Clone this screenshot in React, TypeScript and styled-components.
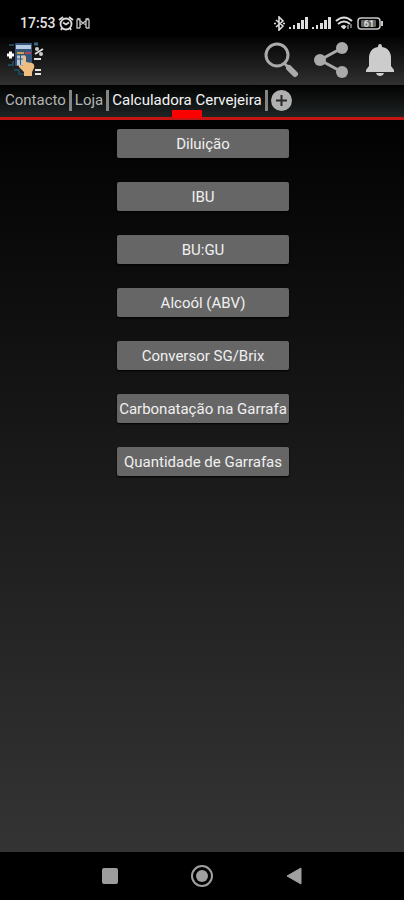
import React from "react";
import styled, { createGlobalStyle } from "styled-components";

const GlobalStyle = createGlobalStyle`
  * { box-sizing: border-box; }
  body { margin: 0; background: #000; font-family: Roboto, "Liberation Sans", sans-serif; }
  button { font: inherit; border: 0; padding: 0; cursor: pointer; }
  svg { display: block; }
`;

const Screen = styled.div`
  display: flex;
  flex-direction: column;
  min-height: 100vh;
  background: #000;
  color: #f0f0f0;
`;

const StatusBar = styled.div`
  display: flex;
  align-items: center;
  justify-content: space-between;
  height: 36px;
  padding: 10px 20px 0 20px;
`;

const StatusGroup = styled.div<{ $gap: number }>`
  display: flex;
  align-items: center;
  gap: ${(p) => p.$gap}px;
`;

const Clock = styled.time`
  font-size: 14px;
  line-height: 16px;
  font-weight: 500;
  color: #e4e4e4;
`;

const Header = styled.header`
  display: flex;
  align-items: center;
  justify-content: space-between;
  height: 49px;
  padding: 0 8px 2px 6px;
  background: linear-gradient(#020202, #303030);
`;

const Actions = styled.div`
  display: flex;
  align-items: center;
  gap: 14px;
`;

const IconButton = styled.button`
  display: flex;
  background: none;
`;

const TabBar = styled.nav`
  display: flex;
  align-items: center;
  height: 35px;
  padding: 0 5px 2px;
  border-bottom: 3px solid #c41414;
  background: linear-gradient(#020202, #1f2424);
`;

const Tab = styled.button<{ $active?: boolean }>`
  position: relative;
  height: 30px;
  background: none;
  font-size: 15px;
  line-height: 30px;
  white-space: nowrap;
  color: ${(p) => (p.$active ? "#f4f4f4" : "#b4b4b4")};
`;

const Indicator = styled.span`
  position: absolute;
  left: 50%;
  bottom: -3px;
  width: 30px;
  height: 8px;
  margin-left: -15px;
  background: #fe0000;
`;

const Divider = styled.span`
  width: 3px;
  height: 21px;
  margin: 0 3px;
  background: #858585;
`;

const Content = styled.main`
  flex: 1;
  display: flex;
  flex-direction: column;
  align-items: center;
  gap: 24px;
  padding: 9px 0 24px 2px;
  background: linear-gradient(#020202, #343434);
`;

const MenuButton = styled.button`
  width: 172px;
  height: 29px;
  border-radius: 2px;
  background: #666;
  box-shadow: 0 1px 2px #000;
  color: #f0f0f0;
  font-size: 15px;
  line-height: 30px;
  white-space: nowrap;
`;

const NavBar = styled.nav`
  display: flex;
  align-items: center;
  justify-content: center;
  gap: 68px;
  height: 48px;
`;

const AppLogo = () => (
  <svg width="40" height="40" viewBox="0 0 40 40" role="img" aria-label="Calculadora">
    <path d="M3 5h5M2 25h5v-4M8 30h5v4h9" fill="none" stroke="#1d4656" strokeWidth="2" />
    <rect x="9" y="3" width="17" height="23" rx="1" fill="#365579" />
    <rect x="10" y="5" width="15" height="4" fill="#b7cce2" />
    <path d="M11 13h7" stroke="#c6a449" strokeWidth="2" />
    <path d="M19 13h6" stroke="#bb4255" strokeWidth="2" />
    <path d="M11 17h7M11 21h6M11 24h6" stroke="#b7cad7" strokeWidth="3" strokeDasharray="3 1" />
    <path d="M1 15h7M4.500 11.500v7" stroke="#fff" strokeWidth="3" />
    <path d="M17 16q2-2 3 1v5l6 1q3 1 2 5l-2 4v4h-8v-4l-5-5q-1-3 2-2l2 1z" fill="#f0bd80" />
    <path d="M29 14l8-5" stroke="#ddd" strokeWidth="2" />
    <circle cx="31" cy="9" r="2" fill="#ccc" />
    <circle cx="35" cy="14" r="2" fill="#ccc" />
    <path d="M28 19h7M29 30h6M29 34h6" stroke="#e5e5e5" strokeWidth="2" />
    <path d="M28 4h4" stroke="#326888" strokeWidth="3" />
  </svg>
);

const AlarmIcon = () => (
  <svg width="16" height="15" viewBox="0 0 16 15" fill="none" stroke="#ddd" strokeWidth="1.800">
    <circle cx="8" cy="8" r="5.500" />
    <path d="M1 4l4-3M15 4l-4-3M4 12l-1 2M12 12l1 2M5 6.500l3 2 3-2" />
  </svg>
);

const MailIcon = () => (
  <svg width="14" height="12" viewBox="0 0 14 12" fill="none" stroke="#bbb">
    <path d="M4 11V2L2 1.500 1 3v8h3M10 11V2l2-.5L13 3v8h-3M2 2l5 4 5-4M4 8l3-2 3 2" strokeWidth="1.400" />
  </svg>
);

const BluetoothIcon = () => (
  <svg width="11" height="15" viewBox="0 0 11 15" fill="none" stroke="#ddd" strokeWidth="1.600">
    <path d="M2 4l7 6-4 4V1l4 4-7 6M0 7.500h2M9 7.500h2" />
  </svg>
);

const SignalIcon = () => (
  <svg width="19" height="12" viewBox="0 0 19 12" fill="#ddd">
    <rect y="10" width="2" height="2" />
    <rect x="4" y="8" width="2" height="4" />
    <rect x="8" y="6" width="3" height="6" />
    <rect x="12" y="3" width="3" height="9" />
    <rect x="16" width="3" height="12" />
  </svg>
);

const WifiIcon = () => (
  <svg width="18" height="14" viewBox="0 0 18 14" fill="none" stroke="#ddd" strokeWidth="2">
    <path d="M1 5q8-7 16 0M3 8q6-5 12 0" />
    <path d="M6 10.500q3-2 5 0l-2 2.500z" fill="#ddd" strokeWidth="1" />
    <path d="M13 9v4M16 8v4" strokeWidth="1" />
  </svg>
);

const BatteryIcon = () => (
  <svg width="27" height="13" viewBox="0 0 27 13" fill="none" stroke="#c8c8c8">
    <rect x="1" y="1" width="22" height="11" rx="3" strokeWidth="1.500" />
    <path d="M25 4v5" strokeWidth="2" />
    <rect x="4" y="3" width="15" height="7" rx="1" fill="#666" stroke="none" />
    <text x="12" y="10" textAnchor="middle" fontSize="9" fontWeight="700" fill="#ddd" stroke="none">61</text>
  </svg>
);

const SearchIcon = () => (
  <svg width="36" height="36" viewBox="0 0 36 36" fill="none">
    <circle cx="13" cy="13" r="11" stroke="#aaa" strokeWidth="3" />
    <path d="M20 21l4 4" stroke="#aaa" strokeWidth="3" />
    <path d="M25 26l6 6" stroke="#aaa" strokeWidth="6" strokeLinecap="round" />
  </svg>
);

const ShareIcon = () => (
  <svg width="36" height="36" viewBox="0 0 36 36" fill="#aaa">
    <path d="M28 6L6 18l22 12" fill="none" stroke="#aaa" strokeWidth="3" />
    <circle cx="28" cy="6" r="6" />
    <circle cx="6" cy="18" r="6" />
    <circle cx="28" cy="30" r="6" />
  </svg>
);

const BellIcon = () => (
  <svg width="32" height="34" viewBox="0 0 32 34" fill="#ccc">
    <path d="M16 1q2 0 2 3c6 1 9 5 9 11v8l3 4v2H2v-2l3-4v-8C5 9 8 5 14 4q0-3 2-3z" />
    <path d="M12 30h8q-1 3-4 3t-4-3z" />
  </svg>
);

const AddIcon = () => (
  <svg width="21" height="21" viewBox="0 0 21 21">
    <circle cx="10.500" cy="10.500" r="10.500" fill="#b0b0b0" />
    <path d="M5 10.500h11M10.500 5v11" stroke="#292929" strokeWidth="2" />
  </svg>
);

const RecentIcon = () => (
  <svg width="24" height="24" viewBox="0 0 24 24">
    <rect x="4" y="4" width="16" height="16" rx="2" fill="#9d9d9d" />
  </svg>
);

const HomeIcon = () => (
  <svg width="24" height="24" viewBox="0 0 24 24">
    <circle cx="12" cy="12" r="10" fill="none" stroke="#a0a0a0" strokeWidth="2" />
    <circle cx="12" cy="12" r="6" fill="#a0a0a0" />
  </svg>
);

const BackIcon = () => (
  <svg width="24" height="24" viewBox="0 0 24 24">
    <path d="M19 4v16L5 12z" fill="#a0a0a0" stroke="#a0a0a0" strokeLinejoin="round" />
  </svg>
);

const calculators = [
  "Diluição",
  "IBU",
  "BU:GU",
  "Alcoól (ABV)",
  "Conversor SG/Brix",
  "Carbonatação na Garrafa",
  "Quantidade de Garrafas",
];

export default function App() {
  return (
    <Screen>
      <GlobalStyle />
      <StatusBar>
        <StatusGroup $gap={2}>
          <Clock>17:53</Clock>
          <AlarmIcon />
          <MailIcon />
        </StatusGroup>
        <StatusGroup $gap={4}>
          <BluetoothIcon />
          <SignalIcon />
          <SignalIcon />
          <WifiIcon />
          <BatteryIcon />
        </StatusGroup>
      </StatusBar>
      <Header>
        <AppLogo />
        <Actions>
          <IconButton aria-label="Pesquisar"><SearchIcon /></IconButton>
          <IconButton aria-label="Partilhar"><ShareIcon /></IconButton>
          <IconButton aria-label="Notificações"><BellIcon /></IconButton>
        </Actions>
      </Header>
      <TabBar>
        <Tab>Contacto</Tab>
        <Divider />
        <Tab>Loja</Tab>
        <Divider />
        <Tab $active aria-current="page">
          Calculadora Cervejeira
          <Indicator />
        </Tab>
        <Divider />
        <IconButton aria-label="Adicionar"><AddIcon /></IconButton>
      </TabBar>
      <Content>
        {calculators.map((name) => (
          <MenuButton key={name}>{name}</MenuButton>
        ))}
      </Content>
      <NavBar>
        <IconButton aria-label="Recentes"><RecentIcon /></IconButton>
        <IconButton aria-label="Início"><HomeIcon /></IconButton>
        <IconButton aria-label="Voltar"><BackIcon /></IconButton>
      </NavBar>
    </Screen>
  );
}
